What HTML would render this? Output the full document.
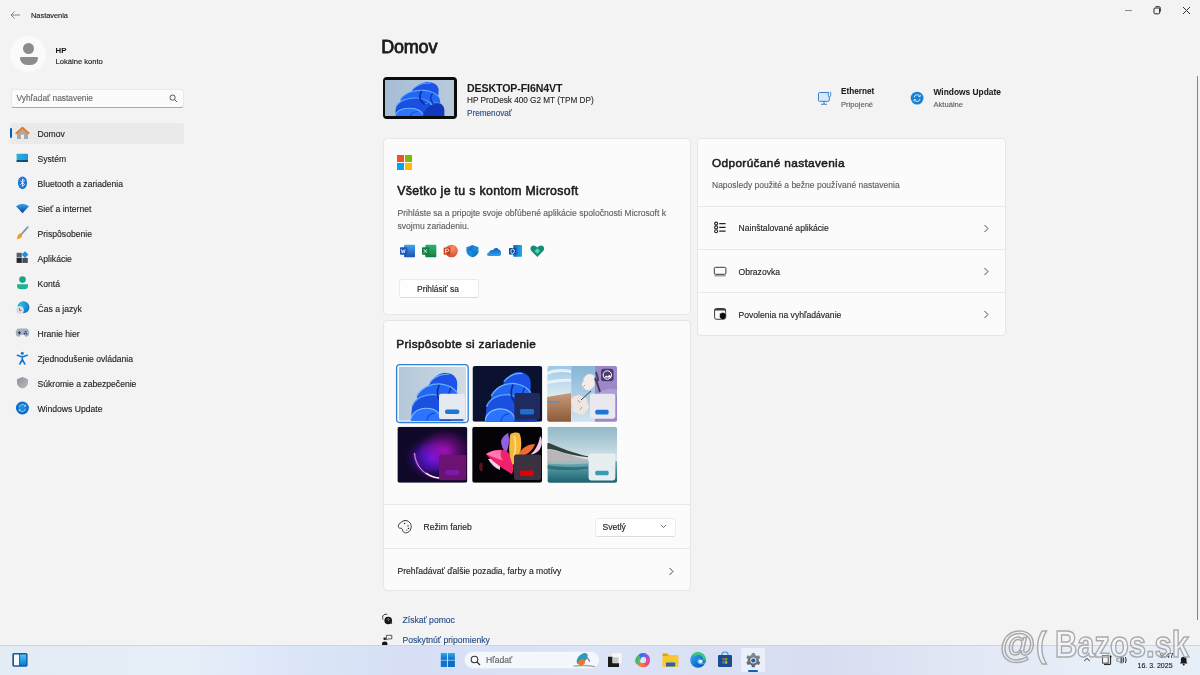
<!DOCTYPE html>
<html><head><meta charset="utf-8">
<style>
*{margin:0;padding:0;box-sizing:border-box}
html,body{width:1200px;height:675px;overflow:hidden;background:#f3f3f3;font-family:"Liberation Sans",sans-serif;color:#1b1b1b}
body{will-change:transform}
.t{-webkit-text-stroke:0.13px currentColor}
.t[style*="font-weight:700"]{-webkit-text-stroke:0.05px currentColor}
.t.sb{-webkit-text-stroke:0.045em currentColor}
.a{position:absolute}
.t{position:absolute;white-space:nowrap;line-height:1}
.nav{font-size:8.6px;color:#1f1f1f}
.card{position:absolute;background:#fbfbfb;border:1px solid #e6e6e6;border-radius:4px}
.div{position:absolute;height:1px;background:#e9e9e9}
.chev{position:absolute;width:5px;height:5px;border-right:1px solid #3a3a3a;border-top:1px solid #3a3a3a;transform:rotate(45deg)}
.link{color:#254e88}
</style></head><body>

<!-- title bar -->
<svg class="a" style="left:9px;top:10px" width="12" height="10" viewBox="0 0 12 10"><path d="M11 5H2M5.5 1.5L2 5l3.5 3.5" fill="none" stroke="#7a7a7a" stroke-width="0.9"/></svg>
<div class="t" style="left:31px;top:11.5px;font-size:7.4px;color:#222">Nastavenia</div>
<div class="a" style="left:1124.5px;top:9.5px;width:7px;height:1px;background:#8a8a8a"></div>
<svg class="a" style="left:1152px;top:5px" width="10" height="10" viewBox="0 0 10 10"><rect x="2" y="3" width="5.6" height="5.8" rx="1" fill="none" stroke="#222" stroke-width="1"/><path d="M3.6 1.6h3.2q1.6 0 1.6 1.6v3.4" fill="none" stroke="#222" stroke-width="0.9"/></svg>
<svg class="a" style="left:1182px;top:6px" width="9" height="9"><path d="M1 1L8 8M8 1L1 8" stroke="#333" stroke-width="1"/></svg>

<!-- profile -->
<div class="a" style="left:10px;top:36px;width:36px;height:36px;border-radius:50%;background:#fafafa"></div>
<div class="a" style="left:23px;top:43px;width:11px;height:11px;border-radius:50%;background:#8c8c8c"></div>
<div class="a" style="left:19.5px;top:56.5px;width:18px;height:8.5px;border-radius:1px 1px 9px 9px;background:#8c8c8c"></div>
<div class="t" style="left:55.5px;top:46.6px;font-size:7.8px;font-weight:700;color:#1a1a1a">HP</div>
<div class="t" style="left:55.5px;top:57.6px;font-size:7.6px;color:#1a1a1a">Lokálne konto</div>

<!-- search -->
<div class="a" style="left:10.8px;top:89px;width:173.4px;height:19px;background:#fbfbfb;border:1px solid #e9e9e9;border-bottom:1px solid #a8a8a8;border-radius:3px"></div>
<div class="t" style="left:16.5px;top:94px;font-size:8.4px;color:#666">Vyhľadať nastavenie</div>
<svg class="a" style="left:169px;top:94px" width="9" height="9" viewBox="0 0 9 9"><circle cx="3.6" cy="3.6" r="2.6" fill="none" stroke="#444" stroke-width="0.9"/><path d="M5.5 5.5L8 8" stroke="#444" stroke-width="0.9"/></svg>

<!-- nav -->
<div class="a" style="left:10px;top:122.5px;width:174px;height:21.5px;background:#eaeaea;border-radius:3px"></div>
<div class="a" style="left:10px;top:128px;width:2px;height:10px;background:#005fb8;border-radius:1px"></div>
<svg class="a" style="left:0;top:0" width="40" height="420" viewBox="0 0 40 420">
<defs>
<linearGradient id="gSys" x1="0" y1="0" x2="1" y2="0"><stop offset="0" stop-color="#22b6d6"/><stop offset="1" stop-color="#2a8ee2"/></linearGradient>
<linearGradient id="gWifi" x1="0" y1="0" x2="0" y2="1"><stop offset="0" stop-color="#35a8ee"/><stop offset="1" stop-color="#0b3f94"/></linearGradient>
<linearGradient id="gShield" x1="0" y1="0" x2="1" y2="1"><stop offset="0" stop-color="#8c9198"/><stop offset="1" stop-color="#b9bdc3"/></linearGradient>
<radialGradient id="gWU" cx="0.5" cy="0.45" r="0.55"><stop offset="0" stop-color="#2a8ee6"/><stop offset="1" stop-color="#0a63bd"/></radialGradient>
<radialGradient id="gGlobe" cx="0.3" cy="0.3" r="0.8"><stop offset="0" stop-color="#2fbfd8"/><stop offset="1" stop-color="#1070d0"/></radialGradient>
</defs>
<!-- home -->
<path d="M17 132.3v6.6h11v-6.6l-5.5-4.4z" fill="#a9a9a9"/>
<rect x="21" y="134.6" width="3" height="4.3" fill="#e9f2ec"/>
<path d="M16.3 133.2L22.5 127.8L28.7 133.2" fill="none" stroke="#e07b2c" stroke-width="1.9" stroke-linecap="round" stroke-linejoin="round"/>
<!-- system -->
<rect x="16.6" y="153.7" width="11.4" height="8" rx="0.6" fill="url(#gSys)"/>
<rect x="16.6" y="160.3" width="11.4" height="1.5" fill="#0a2e4a"/>
<!-- bluetooth -->
<ellipse cx="22.5" cy="182.8" rx="4.6" ry="6.4" fill="#1a78e0"/>
<path d="M20.3 180.6l4.2 3.9-2 1.9v-7.4l2 1.8-4.2 3.9" fill="none" stroke="#fff" stroke-width="0.8" stroke-linejoin="round"/>
<!-- wifi -->
<path d="M16 206.3Q22.5 201 29 206.3L22.5 213.2Z" fill="url(#gWifi)"/>
<!-- brush -->
<path d="M27.8 227.2L21.3 234.3" stroke="#8a97a8" stroke-width="1.8" stroke-linecap="round"/>
<path d="M20.4 233.2c-1.6 0.4-2.3 1.6-2.8 3.2-0.3 1-0.9 1.9-1.1 2.6 2.3 0 4.4-0.6 5.3-2.2 0.6-1 0.4-2.2-1.4-3.6z" fill="#f19a1e"/>
<!-- apps -->
<rect x="16.6" y="252.8" width="5.2" height="4.6" fill="#5c6066"/>
<rect x="16.6" y="257.9" width="5.2" height="5" fill="#222427"/>
<rect x="22.3" y="257.9" width="5.5" height="5" fill="#4a4e54"/>
<path d="M25 251.2L28.4 254.6L25 258L21.6 254.6Z" fill="#1e90dc"/>
<!-- accounts -->
<circle cx="22.5" cy="279.6" r="3.3" fill="#17a589"/>
<path d="M17 284.2h11v1.8a4 3.4 0 0 1-4 3.3h-3a4 3.4 0 0 1-4-3.3z" fill="#1eb396"/>
<!-- time -->
<circle cx="23.4" cy="307.2" r="6" fill="url(#gGlobe)"/>
<circle cx="19.6" cy="310.3" r="3.9" fill="#d9dde2" stroke="#f3f3f3" stroke-width="0.6"/>
<path d="M19.6 308.2v2.2h1.7" fill="none" stroke="#5a4a3a" stroke-width="0.7"/>
<!-- gaming -->
<path d="M18.8 328.6h7.4c2.2 0 3 2.6 3 4.5 0 2.2-1.2 3.6-2.6 3.6-1.2 0-1.8-1-2.6-1.8h-3.1c-0.8 0.8-1.4 1.8-2.6 1.8-1.4 0-2.6-1.4-2.6-3.6 0-1.9 0.9-4.5 3.1-4.5z" fill="#a7b1bf"/>
<path d="M19.4 331.2v3.2M17.8 332.8h3.2" stroke="#2b2f36" stroke-width="1"/>
<circle cx="25.8" cy="331.6" r="0.9" fill="#2c4f8a"/><circle cx="24.6" cy="333.5" r="0.9" fill="#2c4f8a"/><circle cx="26.6" cy="333.9" r="0.8" fill="#2c4f8a"/>
<!-- accessibility -->
<circle cx="22.3" cy="353.2" r="1.5" fill="#1a78d0"/>
<path d="M17.4 355.3L22.3 357L27.2 355.3M22.3 356.6V359.5L19.8 364M22.3 359.5L24.8 364" fill="none" stroke="#1a78d0" stroke-width="1.6" stroke-linecap="round" stroke-linejoin="round"/>
<!-- shield -->
<path d="M22.5 377L28 379.2V382.5C28 385.6 25.7 387.7 22.5 388.6C19.3 387.7 17 385.6 17 382.5V379.2Z" fill="url(#gShield)"/>
<!-- windows update -->
<circle cx="22.4" cy="408" r="6.5" fill="url(#gWU)"/>
<path d="M19.4 407.2a3.1 3.1 0 0 1 5.6-1.4M25.4 408.8a3.1 3.1 0 0 1-5.6 1.4" fill="none" stroke="#8fe0ff" stroke-width="0.9"/>
<path d="M25.6 404.6v1.8h-1.8M19.2 411.4v-1.8h1.8" fill="none" stroke="#8fe0ff" stroke-width="0.9"/>
</svg>

<div class="t nav" style="left:37.5px;top:129.5px">Domov</div>
<div class="t nav" style="left:37.5px;top:154.5px">Systém</div>
<div class="t nav" style="left:37.5px;top:179.5px">Bluetooth a zariadenia</div>
<div class="t nav" style="left:37.5px;top:204.5px">Sieť a internet</div>
<div class="t nav" style="left:37.5px;top:229.5px">Prispôsobenie</div>
<div class="t nav" style="left:37.5px;top:254.5px">Aplikácie</div>
<div class="t nav" style="left:37.5px;top:279.5px">Kontá</div>
<div class="t nav" style="left:37.5px;top:304.5px">Čas a jazyk</div>
<div class="t nav" style="left:37.5px;top:329.5px">Hranie hier</div>
<div class="t nav" style="left:37.5px;top:354.5px">Zjednodušenie ovládania</div>
<div class="t nav" style="left:37.5px;top:379.5px">Súkromie a zabezpečenie</div>
<div class="t nav" style="left:37.5px;top:404.5px">Windows Update</div>

<!-- main header -->
<div class="t sb" style="left:381.2px;top:38px;font-size:18px;letter-spacing:-0.2px;color:#1b1b1b">Domov</div>

<!-- device -->
<div class="a" style="left:382.5px;top:77.2px;width:74px;height:41.6px;background:#0c0c0c;border-radius:4px"></div>
<svg class="a" style="left:385px;top:79.7px" width="69" height="36.6" viewBox="385 79.7 69 36.6"><defs><linearGradient id="gDev" x1="0" y1="0" x2="1" y2="0"><stop offset="0" stop-color="#a6bdd6"/><stop offset="1" stop-color="#b8cadc"/></linearGradient><clipPath id="cDev"><rect x="385" y="79.7" width="69" height="36.6"/></clipPath></defs><rect x="385" y="79.7" width="69" height="36.6" fill="url(#gDev)"/><g clip-path="url(#cDev)"><use href="#bloom" x="394.6" y="81.5" width="50" height="35.5"/></g></svg>
<div class="t" style="left:467px;top:82.8px;font-size:10.6px;font-weight:700;letter-spacing:-0.1px;color:#1b1b1b">DESKTOP-FI6N4VT</div>
<div class="t" style="left:467px;top:97.2px;font-size:8.2px;color:#2b2b2b">HP ProDesk 400 G2 MT (TPM DP)</div>
<div class="t link" style="left:467px;top:109.6px;font-size:8.2px">Premenovať</div>

<!-- ethernet / WU -->
<div class="t" style="left:841px;top:88.2px;font-size:8.2px;font-weight:700;color:#1b1b1b">Ethernet</div>
<div class="t" style="left:841px;top:101px;font-size:7.6px;color:#5f5f5f">Pripojené</div>
<div class="t" style="left:933.5px;top:88px;font-size:8.4px;font-weight:700;color:#1b1b1b">Windows Update</div>
<div class="t" style="left:933.5px;top:101px;font-size:7.6px;color:#5f5f5f">Aktuálne</div>

<!-- ethernet icon -->
<svg class="a" style="left:814px;top:88px" width="20" height="20" viewBox="814 88 20 20">
<rect x="818.5" y="92.5" width="10.8" height="8.8" rx="1" fill="#d6eafa" stroke="#3a80c6" stroke-width="1"/>
<path d="M821 104.2h6M824 101.3v3" stroke="#3a80c6" stroke-width="1.1"/>
<path d="M828.3 91.8v3.4q0 1.6 1.2 1.6q1.2 0 1.2-1.6v-3.4" fill="#eaf4fc" stroke="#3a80c6" stroke-width="0.9"/>
</svg>
<!-- WU header icon -->
<svg class="a" style="left:908px;top:89px" width="18" height="18" viewBox="908 89 18 18">
<circle cx="917.1" cy="98.1" r="6.4" fill="#1a7fd6"/>
<path d="M914.2 97.3a3 3 0 0 1 5.4-1.3M920 98.9a3 3 0 0 1-5.4 1.3" fill="none" stroke="#e8f6ff" stroke-width="0.9"/>
<path d="M920.2 94.8v1.7h-1.7M914.1 101.4v-1.7h1.7" fill="none" stroke="#e8f6ff" stroke-width="0.9"/>
</svg>
<!-- help icons -->
<svg class="a" style="left:380px;top:612px" width="15" height="33" viewBox="380 612 15 33">
<path d="M387.2 614.4a3.3 3.3 0 0 0-4.6 3.2q0 1.2 0.5 2" fill="none" stroke="#222" stroke-width="0.9"/>
<circle cx="388.2" cy="620.5" r="3.8" fill="#161616"/>
<path d="M390.5 623l1.8 1.2-0.6-2" fill="#161616"/>
<path d="M387.2 619.6a1 1 0 1 1 1.3 1v0.6" fill="none" stroke="#d8d8d8" stroke-width="0.6"/>
<circle cx="384.7" cy="638.7" r="1.3" fill="#141414"/>
<path d="M382 645v-1.6c0-1.2 1-2 2.7-2c1.7 0 2.7 0.8 2.7 2v1.6z" fill="#141414"/>
<path d="M386.4 639.3v-4h5.4v3.6h-3.8l-1.2 1.2z" fill="none" stroke="#333" stroke-width="0.8"/>
</svg>

<!-- card 1 -->
<div class="card" style="left:382.5px;top:138px;width:308.7px;height:176.5px"></div>
<div class="a" style="left:397px;top:155px;width:7px;height:7px;background:#f25022"></div>
<div class="a" style="left:405px;top:155px;width:7px;height:7px;background:#7fba00"></div>
<div class="a" style="left:397px;top:163px;width:7px;height:7px;background:#00a4ef"></div>
<div class="a" style="left:405px;top:163px;width:7px;height:7px;background:#ffb900"></div>
<div class="t sb" style="left:397.3px;top:185.3px;font-size:12.3px;letter-spacing:0.33px;color:#1b1b1b">Všetko je tu s kontom Microsoft</div>
<div class="t" style="left:397.5px;top:208.5px;font-size:8.6px;color:#5f5f5f">Prihláste sa a pripojte svoje obľúbené aplikácie spoločnosti Microsoft k</div>
<div class="t" style="left:397.5px;top:221.5px;font-size:8.6px;color:#5f5f5f">svojmu zariadeniu.</div>
<svg class="a" style="left:395px;top:240px" width="155" height="22" viewBox="395 240 155 22">
<defs>
<linearGradient id="gW" x1="0" y1="0" x2="0" y2="1"><stop offset="0" stop-color="#41a5ee"/><stop offset="1" stop-color="#1c4fb0"/></linearGradient>
<linearGradient id="gX" x1="0" y1="0" x2="0" y2="1"><stop offset="0" stop-color="#2bb56e"/><stop offset="1" stop-color="#107a3c"/></linearGradient>
<radialGradient id="gP" cx="0.6" cy="0.3" r="0.8"><stop offset="0" stop-color="#ff8f6b"/><stop offset="1" stop-color="#d2401e"/></radialGradient>
<linearGradient id="gOD" x1="0" y1="0" x2="0" y2="1"><stop offset="0" stop-color="#0f60c4"/><stop offset="1" stop-color="#2ea0f0"/></linearGradient>
<linearGradient id="gOL" x1="0" y1="0" x2="1" y2="0"><stop offset="0" stop-color="#0a64c8"/><stop offset="1" stop-color="#28a8ea"/></linearGradient>
</defs>
<!-- word -->
<rect x="404" y="244.7" width="11" height="12.6" rx="1" fill="url(#gW)"/>
<rect x="400" y="247.3" width="7.3" height="7.4" rx="0.7" fill="#1d56b8"/>
<path d="M401.2 249l1 4 1-3 1 3 1-4" fill="none" stroke="#fff" stroke-width="0.7"/>
<!-- excel -->
<rect x="425.3" y="244.7" width="11" height="12.6" rx="1" fill="url(#gX)"/>
<path d="M430 248.5h6.3M430 251h6.3M430 253.5h6.3" stroke="#38c27a" stroke-width="0.5" opacity="0.6"/>
<rect x="422" y="247.3" width="7" height="7.4" rx="0.7" fill="#107c41"/>
<path d="M423.6 249l3.6 4M427.2 249l-3.6 4" stroke="#fff" stroke-width="0.8"/>
<!-- ppt -->
<circle cx="451.5" cy="251" r="6.3" fill="url(#gP)"/>
<rect x="443.7" y="247.4" width="6.5" height="7.3" rx="0.7" fill="#c43e1c"/>
<path d="M445.6 253.6v-4.6h1.8a1.3 1.3 0 0 1 0 2.6h-1.8" fill="none" stroke="#fff" stroke-width="0.8"/>
<!-- defender -->
<path d="M472.5 245L478.5 247.3V251C478.5 254 476 256.3 472.5 257.2C469 256.3 466.4 254 466.4 251V247.3Z" fill="#1b8ad8"/>
<path d="M472.5 245V257.2C476 256.3 478.5 254 478.5 251H466.4" fill="#0f6cbc" opacity="0.55"/>
<!-- onedrive -->
<path d="M488.5 256C486.6 256 486.6 252.6 489 252.5C489.5 250.6 491.2 249.6 493 250.3C494 247.6 497.5 247 499 249.8C501.5 250 501.8 256 499.5 256Z" fill="url(#gOD)"/>
<!-- outlook -->
<rect x="513.3" y="245" width="8.7" height="11.7" rx="0.8" fill="url(#gOL)"/>
<rect x="509" y="248" width="7.3" height="6.6" rx="0.7" fill="#0a4f9e"/>
<ellipse cx="512.6" cy="251.3" rx="1.8" ry="2.2" fill="none" stroke="#fff" stroke-width="0.8"/>
<!-- family heart -->
<path d="M537.3 257L531.2 250.7C529.6 248.8 530.6 245.4 533.6 245.4C535.2 245.4 536.4 246.4 537.3 247.4C538.2 246.4 539.4 245.4 541 245.4C544 245.4 545 248.8 543.4 250.7Z" fill="#168c72"/>
<path d="M537.3 248.2L540 251L537.3 253.8L534.6 251Z" fill="#4fd6b8"/>
</svg>

<div class="a" style="left:398.5px;top:278.9px;width:80px;height:18.8px;background:#fefefe;border:1px solid #ebebeb;border-bottom-color:#dadada;border-radius:3px"></div>
<div class="t" style="left:398px;top:284.5px;width:80px;text-align:center;font-size:8.4px;color:#1b1b1b">Prihlásiť sa</div>

<!-- card 2 -->
<div class="card" style="left:382.5px;top:319.5px;width:308.7px;height:271.5px"></div>
<div class="t sb" style="left:396.3px;top:338.8px;font-size:11.8px;letter-spacing:0.32px;color:#1b1b1b">Prispôsobte si zariadenie</div>
<svg class="a" style="left:390px;top:360px" width="235" height="130" viewBox="390 360 235 130">
<defs>
<symbol id="bloom" viewBox="0 0 100 100" preserveAspectRatio="none">
 <path d="M30 36C38 14 50 3 62 1C76 0 88 8 88 24C88 38 86 48 84 56L30 56Z" fill="#1c52e8"/>
 <path d="M36 20C46 8 58 3 72 4" fill="none" stroke="#6ab6ff" stroke-width="2.4"/>
 <path d="M12 48C22 30 40 22 58 24C72 26 82 32 88 42C92 50 92 62 90 78L12 78Z" fill="#2466f4"/>
 <path d="M12 48C22 30 40 22 58 24C72 26 82 32 88 42" fill="none" stroke="#62b0ff" stroke-width="2.6"/>
 <path d="M3 70C8 54 26 44 46 46C60 48 70 56 76 68L76 100L0 100Z" fill="#1a4fe0"/>
 <path d="M3 70C8 54 26 44 46 46C60 48 70 56 76 68" fill="none" stroke="#58a6ff" stroke-width="2.6"/>
 <path d="M0 100C0 86 12 74 30 74C46 74 56 84 60 100Z" fill="#2b74ff"/>
 <path d="M0 100C0 86 12 74 30 74C46 74 56 84 60 100" fill="none" stroke="#7cc4ff" stroke-width="2.2"/>
 <path d="M56 100C58 78 72 62 88 60C96 62 100 72 100 84L100 100Z" fill="#1238bc"/>
 <path d="M60 62C70 56 82 56 90 60" fill="none" stroke="#4a90ff" stroke-width="2"/>
 <path d="M54 26C48 40 50 54 60 64" fill="none" stroke="#0a2a9a" stroke-width="3.2"/>
 <path d="M76 32C70 44 72 54 78 62" fill="none" stroke="#0c2ea6" stroke-width="2.4"/>
 <path d="M30 100C32 90 38 84 46 84" fill="none" stroke="#1a4ad8" stroke-width="2.4"/>
</symbol>




<linearGradient id="gBg1" x1="0" y1="0" x2="1" y2="0"><stop offset="0" stop-color="#b3c6d8"/><stop offset="1" stop-color="#cfdbe6"/></linearGradient>
<radialGradient id="gGlow" cx="0.72" cy="0.38" r="0.7"><stop offset="0" stop-color="#c02ad0"/><stop offset="0.45" stop-color="#6414a8"/><stop offset="1" stop-color="#1a0a3a"/></radialGradient>
<linearGradient id="gLake" x1="0" y1="0" x2="0" y2="1"><stop offset="0" stop-color="#9cbccc"/><stop offset="0.3" stop-color="#c6d8e0"/><stop offset="0.5" stop-color="#dde6ea"/><stop offset="0.62" stop-color="#8fb4bd"/><stop offset="1" stop-color="#2e6f7c"/></linearGradient>
<clipPath id="c1"><rect x="398.7" y="366.7" width="67.3" height="54" rx="2"/></clipPath>
<clipPath id="c2"><rect x="472.5" y="366" width="69.8" height="55.8" rx="2.5"/></clipPath>
<clipPath id="c3"><rect x="547.2" y="366" width="70" height="55.8" rx="2.5"/></clipPath>
<clipPath id="c4"><rect x="397.4" y="426.8" width="70" height="56" rx="2.5"/></clipPath>
<clipPath id="c5"><rect x="472.2" y="426.8" width="69.8" height="56" rx="2.5"/></clipPath>
<clipPath id="c6"><rect x="547.4" y="426.8" width="69.8" height="56" rx="2.5"/></clipPath>
</defs>
<!-- thumb1 -->
<rect x="396.6" y="364.6" width="71.6" height="57.9" rx="3.2" fill="none" stroke="#2f7fda" stroke-width="1.3"/>
<g clip-path="url(#c1)">
 <rect x="398.7" y="366.7" width="67.3" height="54" fill="url(#gBg1)"/>
 <use href="#bloom" x="410.6" y="372.4" width="53" height="48.5"/>
 <rect x="439" y="393.8" width="26" height="25.5" rx="2.2" fill="#e6e9ef"/>
 <rect x="445" y="409.4" width="14.4" height="4.7" rx="2" fill="#1a78d4"/>
</g>
<!-- thumb2 -->
<g clip-path="url(#c2)">
 <rect x="472.5" y="366" width="69.8" height="55.8" fill="#0b1230"/>
 <use href="#bloom" x="485" y="371.5" width="52" height="50.5"/>
 <rect x="514.4" y="393" width="25.6" height="26.5" rx="2.2" fill="#1f2a5e"/>
 <rect x="520" y="409" width="14" height="5.5" rx="1.5" fill="#1a6fd0"/>
</g>
<!-- thumb3 -->
<defs>
<linearGradient id="gS1" x1="0" y1="0" x2="0" y2="1"><stop offset="0" stop-color="#9cc8e8"/><stop offset="0.5" stop-color="#d8e8f2"/><stop offset="1" stop-color="#e0eaf0"/></linearGradient>
<linearGradient id="gS2" x1="0" y1="0" x2="0" y2="1"><stop offset="0" stop-color="#86b4d6"/><stop offset="1" stop-color="#cfe4f2"/></linearGradient>
<linearGradient id="gBeach" x1="0" y1="0" x2="0" y2="1"><stop offset="0" stop-color="#c89a78"/><stop offset="1" stop-color="#8a5a3a"/></linearGradient>
<radialGradient id="gG4a" cx="0.5" cy="0.55" r="0.42"><stop offset="0" stop-color="#5a18f0"/><stop offset="0.5" stop-color="#5010b8" stop-opacity="0.75"/><stop offset="1" stop-color="#1a0838" stop-opacity="0"/></radialGradient>
<radialGradient id="gG4b" cx="0.68" cy="0.42" r="0.38"><stop offset="0" stop-color="#b010b8" stop-opacity="0.85"/><stop offset="1" stop-color="#b010b8" stop-opacity="0"/></radialGradient>
<linearGradient id="gSky6" x1="0" y1="0" x2="0" y2="1"><stop offset="0" stop-color="#90b8c8"/><stop offset="0.6" stop-color="#bcd4dc"/><stop offset="1" stop-color="#dce8ec"/></linearGradient>
<linearGradient id="gWater6" x1="0" y1="0" x2="0" y2="1"><stop offset="0" stop-color="#7ab2bc"/><stop offset="0.35" stop-color="#4a94a0"/><stop offset="1" stop-color="#20606e"/></linearGradient>
</defs>
<g clip-path="url(#c3)">
 <rect x="547.2" y="366" width="24" height="56" fill="url(#gS1)"/>
 <path d="M547 372c6-3 14-4 24-2v3c-9-2-17-1-24 2z" fill="#ffffff" opacity="0.7"/>
 <path d="M547 381c8-1 16-3 24-2v3c-8-1-16 1-24 2z" fill="#f4f8fc" opacity="0.8"/>
 <path d="M547 397c8-1 16-3 24-4v29h-24z" fill="url(#gBeach)"/>
 <path d="M547 402h12" stroke="#6a8ab0" stroke-width="1.4"/>
 <rect x="571.2" y="366" width="23.6" height="56" fill="url(#gS2)"/>
 <path d="M584 378c2-4 6-5 9-3c2 1 2 4 1 6c2 2 1 6-2 7c-2 3-6 3-8 0c-3-1-3-5 0-7c-1-1-1-2 0-3z" fill="#f3ece8"/>
 <path d="M572 398c3-3 8-4 11-1c3 0 5 3 4 6c3 2 2 7-1 8c-1 4-6 5-9 2c-4 0-6-4-4-7c-2-2-2-6-1-8z" fill="#efe6e2"/>
 <path d="M578 400l2 3M582 407l-2 3M585 385l-2 2" stroke="#a08a8a" stroke-width="0.8"/>
 <path d="M591 391l-10 9" stroke="#2a2a2a" stroke-width="0.9"/>
 <rect x="594.8" y="366" width="22.4" height="56" fill="#9a88c8"/>
 <path d="M595 378c2 4 3 8 5 14M596 372c1 3 2 6 2 9" stroke="#3a3040" stroke-width="2" fill="none" opacity="0.85"/>
 <path d="M600 392c6-4 12-4 17-2v6c-6-2-12-2-17 1z" fill="#b8a8d8" opacity="0.7"/>
 <rect x="601" y="368.8" width="12.5" height="12.4" rx="2.6" fill="#4a3a70"/>
 <circle cx="607.3" cy="375" r="4.2" fill="none" stroke="#fff" stroke-width="1"/>
 <path d="M604 377.4l2.2-2 1.4 1 1.8-1.6 2 2.2v0.6h-7.4z" fill="#fff"/>
 <rect x="590" y="393.7" width="25.3" height="25" rx="2.4" fill="#e9e8f0"/>
 <rect x="595.3" y="409.7" width="13.3" height="4.9" rx="1.5" fill="#1a78d4"/>
</g>
<!-- thumb4 -->
<g clip-path="url(#c4)">
 <rect x="397.4" y="426.8" width="70" height="56" fill="#100828"/>
 <rect x="397.4" y="426.8" width="70" height="56" fill="url(#gG4a)"/>
 <rect x="397.4" y="426.8" width="70" height="56" fill="url(#gG4b)"/>
 <path d="M414.5 453A26 26 0 0 0 440 478" fill="none" stroke="#c040e0" stroke-width="2.6" opacity="0.35"/>
 <path d="M414.5 453A26 26 0 0 0 440 478" fill="none" stroke="#f0b0f0" stroke-width="0.8"/>
 <path d="M426 473A26 26 0 0 0 440 478" fill="none" stroke="#fff4f8" stroke-width="1.3"/>
 <rect x="439" y="454.8" width="27.3" height="25.4" rx="2.2" fill="#6c1272"/>
 <rect x="445.5" y="470" width="14" height="5" rx="1.5" fill="#7a1aa8"/>
</g>
<!-- thumb5 -->
<g clip-path="url(#c5)">
 <rect x="472.2" y="426.8" width="69.8" height="56" fill="#050307"/>
 <path d="M479 466c1-3 2-4 3.5-3.5l0 9c-2 0.5-3-1-3.5-5.5z" fill="#5a1420"/>
 <path d="M488 459c4-1 9 0 12 3l0 8c-5-2-9-6-12-11z" fill="#eed0ee"/>
 <path d="M501 441c2-5 5-7 7-8c2 6 1 14-2 20c-3-3-5-8-5-12z" fill="#9060e0"/>
 <path d="M486 454c6-4 12-5 17-4c6 1 9 7 10 13c1 5 0 9-1 11c-9-5-19-12-26-20z" fill="#f0206a"/>
 <path d="M486 454c5-3 10-4 15-3.6c-1 4 0 7 2 10c-7-2-12-4-17-6.4z" fill="#ff78b0"/>
 <path d="M510.5 434c3-2 7-2 9-0.5c3 7 2 17-1 25c-2 4-4 6-6 6c-3-7-4-15-3-21c0-4 0-6.5 1-9.5z" fill="#f6b83a"/>
 <path d="M514 436c2 6 2 13 0 21" stroke="#ffe080" stroke-width="1.6" fill="none"/>
 <path d="M519 453c4-6 10-9 16-9c-2 6-7 10-14 13z" fill="#f26a2e"/>
 <path d="M530 455c5-4 9-11 10-19c2.5 2 2.5 8 0.5 12c-2 4-6 6-10.5 7z" fill="#f2c6e6"/>
 <rect x="514" y="454.4" width="27.2" height="25.6" rx="2.2" fill="#3a3240"/>
 <rect x="519.8" y="470.4" width="13.8" height="5.6" rx="1.2" fill="#e0000a"/>
</g>
<!-- thumb6 -->
<g clip-path="url(#c6)">
 <rect x="547.4" y="426.8" width="69.8" height="35" fill="url(#gSky6)"/>
 <rect x="547.4" y="461" width="69.8" height="22" fill="url(#gWater6)"/>
 <path d="M547 449c10 2 22 5.5 30 8c4 1.2 8 2 11 2.5v2h-41z" fill="#b9b6ba"/>
 <path d="M547 443c3 0 6 1.5 9 3c8 3.5 18 6.5 26 9c2 0.6 4 1 6 1.3l0 1c-10-1-22-3.5-32-7c-3-1-6-1.3-9-1.3z" fill="#34423f"/>
 <path d="M547 461h41v2.5c-12 1-28 1-41 0z" fill="#9cbcc2"/>
 <path d="M547 465c12 2 26 3 41 1.5v2c-14 2-28 2-41 0z" fill="#1a4850" opacity="0.5"/>
 <rect x="588.6" y="453.5" width="26.7" height="27" rx="2.4" fill="#e6eef0"/>
 <rect x="595.3" y="470.8" width="13.3" height="4.5" rx="1.5" fill="#3a9ab8"/>
</g>
</svg>

<div class="div" style="left:383px;top:504px;width:308px"></div>
<div class="t" style="left:423.5px;top:523.3px;font-size:8.6px;color:#1f1f1f">Režim farieb</div>
<div class="a" style="left:595.2px;top:518px;width:81px;height:18.5px;background:#fefefe;border:1px solid #ececec;border-bottom-color:#dcdcdc;border-radius:3px"></div>
<div class="t" style="left:602.5px;top:523.3px;font-size:8.6px;color:#1b1b1b">Svetlý</div>
<svg class="a" style="left:660px;top:524px" width="7" height="5"><path d="M1 1l2.5 2.5L6 1" fill="none" stroke="#555" stroke-width="0.8"/></svg>
<div class="div" style="left:383px;top:548px;width:308px"></div>
<div class="t" style="left:397.5px;top:566.8px;font-size:8.6px;color:#1f1f1f">Prehľadávať ďalšie pozadia, farby a motívy</div>
<svg class="a" style="left:668px;top:566.5px" width="6" height="9"><path d="M1.5 1l3.5 3.5L1.5 8" fill="none" stroke="#333" stroke-width="0.9"/></svg>

<!-- card 3 recommended -->
<div class="card" style="left:697.2px;top:138px;width:309.3px;height:197.5px"></div>
<div class="t sb" style="left:712px;top:157.8px;font-size:11.8px;letter-spacing:0.37px;color:#1b1b1b">Odporúčané nastavenia</div>
<div class="t" style="left:712px;top:180.6px;font-size:8.5px;color:#5f5f5f">Naposledy použité a bežne používané nastavenia</div>
<div class="div" style="left:698px;top:206px;width:308px"></div>
<div class="t" style="left:738.5px;top:224.3px;font-size:8.6px;color:#1f1f1f">Nainštalované aplikácie</div>
<svg class="a" style="left:983px;top:223.5px" width="6" height="9"><path d="M1.5 1l3.5 3.5L1.5 8" fill="none" stroke="#333" stroke-width="0.9"/></svg>
<div class="div" style="left:698px;top:249px;width:308px"></div>
<div class="t" style="left:738.5px;top:267.5px;font-size:8.6px;color:#1f1f1f">Obrazovka</div>
<svg class="a" style="left:983px;top:266.5px" width="6" height="9"><path d="M1.5 1l3.5 3.5L1.5 8" fill="none" stroke="#333" stroke-width="0.9"/></svg>
<div class="div" style="left:698px;top:292px;width:308px"></div>
<div class="t" style="left:738.5px;top:310.7px;font-size:8.6px;color:#1f1f1f">Povolenia na vyhľadávanie</div>
<svg class="a" style="left:983px;top:309.5px" width="6" height="9"><path d="M1.5 1l3.5 3.5L1.5 8" fill="none" stroke="#333" stroke-width="0.9"/></svg>

<!-- recommended icons -->
<svg class="a" style="left:710px;top:218px" width="22" height="106" viewBox="710 218 22 106">
<g fill="none" stroke="#222" stroke-width="1.1">
<circle cx="716.1" cy="223.6" r="1.5"/><circle cx="716.1" cy="227.4" r="1.5"/><circle cx="716.1" cy="231.2" r="1.5"/>
</g>
<path d="M719.2 223.6h6.4M719.2 227.4h6.4M719.2 231.2h6.4" stroke="#222" stroke-width="1.25"/>
<rect x="714.3" y="267.3" width="11.6" height="7" rx="1.2" fill="none" stroke="#2e2e2e" stroke-width="0.95"/>
<path d="M714.3 275.8h11.6" stroke="#5a5a5a" stroke-width="0.8"/>
<rect x="714.6" y="308.5" width="11" height="10.8" rx="1.8" fill="none" stroke="#2e2e2e" stroke-width="0.95"/>
<path d="M714.6 309.8h11" stroke="#2e2e2e" stroke-width="1.4"/>
<path d="M722.9 312.3l3.4 1.2v2.8c0 2-1.5 3.2-3.4 3.6c-1.9-0.4-3.4-1.6-3.4-3.6v-2.8z" fill="#0c0c0c" stroke="#fbfbfb" stroke-width="0.6"/>
</svg>
<!-- palette -->
<svg class="a" style="left:396px;top:518px" width="18" height="17" viewBox="396 518 18 17">
<path d="M401.5 522c2-1.8 5-2 7.2-0.4c2.6 1.8 3.2 5.6 1.6 8.4c-1.4 2.6-4.6 3.6-6.6 2.2c-1-0.7-0.8-2.2-1.4-3.2c-0.6-1-2-0.6-3-1c-1.4-0.6-1.2-2.6-0.2-3.8c0.5-0.8 1.5-1.6 2.4-2.2z" fill="none" stroke="#2a2a2a" stroke-width="0.95"/>
<circle cx="404.6" cy="523.6" r="0.75" fill="#2a2a2a"/><circle cx="408" cy="526" r="0.75" fill="#2a2a2a"/><circle cx="408.5" cy="528.6" r="0.75" fill="#2a2a2a"/><circle cx="406.8" cy="530.2" r="0.7" fill="#777"/>
</svg>
<!-- help links -->
<div class="t link" style="left:402.5px;top:615.5px;font-size:8.6px">Získať pomoc</div>
<div class="t link" style="left:402.5px;top:635.5px;font-size:8.6px">Poskytnúť pripomienky</div>

<!-- scrollbar -->
<div class="a" style="left:1196.5px;top:76px;width:1.2px;height:544px;background:#808080;border-radius:1px"></div>

<!-- taskbar -->
<div class="a" style="left:0;top:645px;width:1200px;height:30px;background:linear-gradient(90deg,#e3ebf5 0%,#e6eef8 16%,#dce6f8 24%,#d6dff5 34%,#dbe3f6 48%,#d9e0f4 62%,#d8dcf0 68%,#e0e6f4 78%,#e6eef8 90%,#e6eef8 100%);border-top:1px solid #cdd5e2"></div>

<div class="a" style="left:464px;top:651px;width:136px;height:18px;border-radius:9px;background:#f4f7fc;border:1px solid #e2e8f2"></div>
<svg class="a" style="left:470px;top:655px" width="11" height="11" viewBox="0 0 11 11"><circle cx="4.5" cy="4.5" r="3.3" fill="none" stroke="#333" stroke-width="1.1"/><path d="M7 7l3 3" stroke="#333" stroke-width="1.2"/></svg>
<div class="t" style="left:486px;top:655.5px;font-size:8.6px;color:#5f5f5f">Hľadať</div>

<div class="t" style="left:1160px;top:652px;font-size:7px;color:#222">9:47</div>
<div class="t" style="left:1137.5px;top:661.5px;font-size:7px;color:#222">16. 3. 2025</div>

<svg class="a" style="left:0;top:645px" width="1200" height="30" viewBox="0 645 1200 30">
<defs>
<linearGradient id="gStart" x1="0" y1="0" x2="0" y2="1"><stop offset="0" stop-color="#2aaef0"/><stop offset="1" stop-color="#0a68c8"/></linearGradient>
<linearGradient id="gCop" x1="0" y1="0" x2="1" y2="1"><stop offset="0" stop-color="#1a8ae8"/><stop offset="0.35" stop-color="#40c070"/><stop offset="0.6" stop-color="#f0a030"/><stop offset="0.8" stop-color="#f04a6a"/><stop offset="1" stop-color="#b04ae0"/></linearGradient>
<linearGradient id="gEdge" x1="0" y1="0" x2="1" y2="1"><stop offset="0" stop-color="#36c0e8"/><stop offset="0.5" stop-color="#1a7ad8"/><stop offset="1" stop-color="#0a4aa0"/></linearGradient>
<linearGradient id="gGear" x1="0" y1="0" x2="0" y2="1"><stop offset="0" stop-color="#8a8e96"/><stop offset="1" stop-color="#5a5e66"/></linearGradient>
</defs>
<!-- start -->
<rect x="440.8" y="653" width="6.3" height="6.8" fill="url(#gStart)"/>
<rect x="448" y="653" width="6.9" height="6.8" fill="url(#gStart)"/>
<rect x="440.8" y="660.5" width="6.3" height="6.5" fill="#0e74d0"/>
<rect x="448" y="660.5" width="6.9" height="6.5" fill="#0c6cc8"/>
<!-- widgets left -->
<defs><linearGradient id="gWid" x1="0" y1="0" x2="0" y2="1"><stop offset="0" stop-color="#48c4f4"/><stop offset="1" stop-color="#0a7ad4"/></linearGradient></defs>
<rect x="12.3" y="653" width="15.3" height="13.7" rx="1.6" fill="#1a5a9c"/>
<rect x="14" y="654.6" width="5" height="10.6" rx="0.5" fill="#f6f8fc"/>
<rect x="19.8" y="654.6" width="6.4" height="10.6" rx="0.5" fill="url(#gWid)"/>
<!-- kingfisher -->
<path d="M573.5 666.2Q584 664.6 595 666.6" stroke="#8f9c80" stroke-width="1.3" fill="none" opacity="0.8"/>
<path d="M577 663.5C575.8 659.5 578.5 655 583 653.4C586.2 652.4 588.3 654.2 587.6 657C587 659.6 584 661.8 580 664.5Z" fill="#2a9cb8"/>
<ellipse cx="581.6" cy="662.4" rx="3.6" ry="3" transform="rotate(-35 581.6 662.4)" fill="#e8782a"/>
<path d="M587.2 657.6L589.8 661.6" stroke="#9a5aa0" stroke-width="1.1"/>
<!-- task view -->
<rect x="612" y="653" width="10" height="10.5" fill="#f6f6f6" stroke="#e0e0e0" stroke-width="0.4"/>
<path d="M608 656.8h4.5v6.5h6.5v3.7h-11z" fill="#1a1a1a"/>
<rect x="612.5" y="657.3" width="6" height="5.5" fill="#c8c8c8"/>
<!-- copilot -->
<g fill="none" stroke-width="3.8" stroke-linecap="round">
<path d="M638.6 659.2A4.6 4.6 0 0 1 644.5 655" stroke="#2a72e8"/>
<path d="M644.5 655A4.6 4.6 0 0 1 648 660" stroke="#8a58e0"/>
<path d="M648 660A4.6 4.6 0 0 1 643 665.2" stroke="#e84a8a"/>
<path d="M643 665.2A4.6 4.6 0 0 1 638 661.4" stroke="#f07a3a"/>
<path d="M638 661.4A4.6 4.6 0 0 1 638.6 659" stroke="#6ac04a"/>
</g>
<path d="M637.2 662.5A4.6 4.6 0 0 1 638.8 657.2" fill="none" stroke="#4ab86a" stroke-width="3.4" stroke-linecap="round"/>
<circle cx="643" cy="660.2" r="1.6" fill="#dfe7f6"/>
<!-- explorer -->
<path d="M662.5 655.5c0-1.2 0.6-2 1.6-2h3.8l1.4 1.4h8.2c0.6 0 0.9 0.4 0.9 1v10.3c0 0.6-0.3 0.9-0.9 0.9h-14.1c-0.6 0-0.9-0.3-0.9-0.9z" fill="#f8c830"/>
<path d="M662.5 654.5c0-0.6 0.4-1 1-1h3.6l1.2 1.4v1.2h-5.8z" fill="#e0a020"/>
<rect x="666" y="662.4" width="9.2" height="4.2" rx="0.5" fill="#1e64b4"/>
<!-- edge -->
<circle cx="698" cy="660" r="7.8" fill="url(#gEdge)"/>
<path d="M693.6 655.2A6.3 6.3 0 0 1 704.3 660.4" fill="none" stroke="#46cc78" stroke-width="2.8" opacity="0.9"/>
<path d="M705.7 660.4c0 2-1.8 3.4-4.2 3.4c-2.2 0-3.6-1.2-3.6-2.8c0-1.4 1-2.2 2.2-2.6" fill="none" stroke="#3ab0d8" stroke-width="1.4"/>
<ellipse cx="700.6" cy="661.3" rx="2.2" ry="1.9" fill="#d4f2fc"/>
<!-- store -->
<path d="M722 655.5v-1.2c0-1.5 1.2-2.3 3-2.3s3 0.8 3 2.3v1.2" fill="none" stroke="#3a9ae0" stroke-width="1.2"/>
<rect x="718" y="655" width="14" height="12" rx="1.2" fill="#1a4a90"/>
<rect x="722.5" y="658" width="2" height="2.5" fill="#f25022"/><rect x="725.2" y="658" width="2" height="2.5" fill="#7fba00"/>
<rect x="722.5" y="661.2" width="2" height="2.5" fill="#00a4ef"/><rect x="725.2" y="661.2" width="2" height="2.5" fill="#ffb900"/>
<!-- settings active -->
<rect x="741" y="648" width="24.2" height="24" rx="2.5" fill="#eef2fa" opacity="0.85"/>
<g transform="translate(753.3 660.5)">
<path d="M-1.4-7.6h2.8l0.5 2a5.6 5.6 0 0 1 1.7 1l2-0.6 1.4 2.4-1.5 1.4a5.6 5.6 0 0 1 0 2l1.5 1.4-1.4 2.4-2-0.6a5.6 5.6 0 0 1-1.7 1l-0.5 2h-2.8l-0.5-2a5.6 5.6 0 0 1-1.7-1l-2 0.6-1.4-2.4 1.5-1.4a5.6 5.6 0 0 1 0-2l-1.5-1.4 1.4-2.4 2 0.6a5.6 5.6 0 0 1 1.7-1z" fill="url(#gGear)"/>
<circle r="3" fill="#dfe8f4"/>
<circle r="2.1" fill="#1a5cb0"/>
</g>
<rect x="748" y="670" width="10" height="2" rx="1" fill="#0a64c8"/>
<!-- tray -->
<path d="M1084.2 661l2.8-2.6 2.8 2.6" fill="none" stroke="#222" stroke-width="0.9"/>
<rect x="1102.6" y="655.5" width="5.6" height="7.6" fill="#eef2f8" stroke="#2a2a2a" stroke-width="0.8"/>
<path d="M1104 664.4h6.4" stroke="#2a2a2a" stroke-width="1.3"/>
<path d="M1110.6 655.8v8.6" stroke="#1a1a1a" stroke-width="1"/>
<ellipse cx="1110.6" cy="656.6" rx="0.8" ry="1.2" fill="#1a1a1a"/>
<path d="M1116.8 658.6h1.8l2-1.8v6.2l-2-1.8h-1.8z" fill="none" stroke="#777" stroke-width="0.8"/>
<path d="M1121.8 656.8v6.6M1123.2 657.5q1 2.5 0 5M1125.4 657q1.6 3 0 6" fill="none" stroke="#1a1a1a" stroke-width="0.9"/>
<path d="M1180 663.5h7.5l-1-1.4v-2.6a2.8 2.8 0 0 0-5.6 0v2.6z" fill="#1a1a1a"/>
<circle cx="1183.7" cy="664.5" r="1" fill="#1a1a1a"/>
</svg>

<!-- watermark -->
<svg class="a" style="left:990px;top:620px" width="210" height="55" viewBox="990 620 210 55">
<g font-family="Liberation Sans" font-weight="700" font-size="36" fill="rgba(255,255,255,0.3)" stroke="#a2a2a2" stroke-width="1.5" stroke-opacity="0.9">
<text x="1000" y="657" font-size="36" textLength="35.5" lengthAdjust="spacingAndGlyphs">@</text>
<text x="1036" y="656.5" font-size="34.5" textLength="10.5" lengthAdjust="spacingAndGlyphs">(</text>
<text x="1055" y="657" textLength="134" lengthAdjust="spacingAndGlyphs">Bazos.sk</text>
</g></svg>
</body></html>
